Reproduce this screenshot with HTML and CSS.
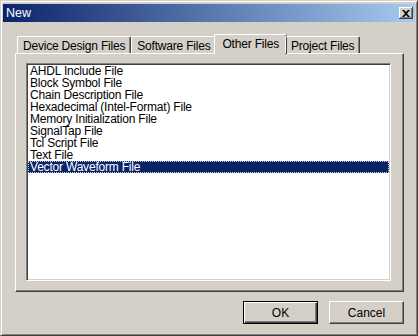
FILE: index.html
```html
<!DOCTYPE html>
<html lang="en">
<head>
    <meta charset="UTF-8">
    <meta name="viewport" content="width=device-width, initial-scale=1.0">
    <title>New</title>
    <link rel="stylesheet" href="styles.css">
</head>
<body>
    <div class="window">
        <div class="titlebar">
            <span class="title">New</span>
            <button class="close" aria-label="Close">
                <svg width="8" height="7" viewBox="0 0 8 7">
                    <path d="M0 0h2l2 2 2-2h2L5 3.5 8 7H6L4 5 2 7H0l3-3.5z" fill="#000"/>
                </svg>
            </button>
        </div>

        <div class="tabs">
            <div class="tab">Device Design Files</div>
            <div class="tab">Software Files</div>
            <div class="tab selected">Other Files</div>
            <div class="tab">Project Files</div>
        </div>
        <div class="panel">
            <ul class="list">
                <li>AHDL Include File</li>
                <li>Block Symbol File</li>
                <li>Chain Description File</li>
                <li>Hexadecimal (Intel-Format) File</li>
                <li>Memory Initialization File</li>
                <li>SignalTap File</li>
                <li>Tcl Script File</li>
                <li>Text File</li>
                <li class="active">Vector Waveform File</li>
            </ul>
        </div>

        <div class="buttons">
            <button class="btn default">OK</button>
            <button class="btn">Cancel</button>
        </div>
    </div>
</body>
</html>
```

FILE: styles.css
```css
* {
    box-sizing: border-box;
}
body {
    margin: 0;
    background-color: #d4d0c8;
    font-family: "Liberation Sans", Arial, sans-serif;
    font-size: 12px;
    color: #000;
}
.window {
    width: 418px;
    height: 336px;
    padding: 2px;
    border: 1px solid;
    border-color: #d4d0c8 #404040 #404040 #d4d0c8;
    box-shadow: inset 1px 1px #fff, inset -1px -1px #808080;
    background-color: #d4d0c8;
}
.titlebar {
    height: 18px;
    margin-top: 1px;
    display: flex;
    align-items: center;
    justify-content: space-between;
    padding: 0 2px 0 3px;
    background: linear-gradient(to right, #0a246a, #a6caf0);
}
.title {
    color: #fff;
    font-size: 12.5px;
}
.close {
    width: 14px;
    height: 12px;
    padding: 0;
    display: flex;
    align-items: center;
    justify-content: center;
    background-color: #d4d0c8;
    border: none;
    box-shadow: inset -1px -1px #404040, inset 1px 1px #fff, inset -2px -2px #808080;
}
.tabs {
    display: flex;
    align-items: flex-end;
    height: 20px;
    margin: 11px 0 0 14px;
    position: relative;
    z-index: 1;
}
.tab {
    height: 17px;
    padding: 2px 5px 0;
    border-top: 1px solid #fff;
    border-left: 1px solid #fff;
    border-right: 1px solid #404040;
    box-shadow: inset -1px 0 #808080;
    border-radius: 2px 2px 0 0;
    letter-spacing: -0.2px;
    white-space: nowrap;
}
.tab.selected {
    height: 20px;
    margin: 0 -2px -1px;
    padding: 2px 7px 0;
    background-color: #d4d0c8;
}
.panel {
    width: 389px;
    height: 239px;
    margin-left: 12px;
    padding: 9px 12px 10px 10px;
    border: 1px solid;
    border-color: #fff #404040 #404040 #fff;
    box-shadow: inset -1px -1px #808080;
}
.list {
    list-style: none;
    margin: 0;
    height: 100%;
    padding: 1px 0 0 1px;
    background-color: #fff;
    border: 1px solid;
    border-color: #808080 #fff #fff #808080;
    box-shadow: inset 1px 1px #404040, inset -1px -1px #d4d0c8;
}
.list li {
    height: 12px;
    line-height: 12px;
    padding-left: 2px;
    margin-right: 1px;
    letter-spacing: -0.2px;
    white-space: nowrap;
}
.list li.active {
    background-color: #0a246a;
    color: #fff;
    outline: 1px dotted #d4d0c8;
    outline-offset: -1px;
}
.buttons {
    display: flex;
    justify-content: flex-end;
    gap: 11px;
    margin-top: 9px;
    padding-right: 11px;
}
.btn {
    width: 75px;
    height: 23px;
    padding: 0;
    font-family: "Liberation Sans", Arial, sans-serif;
    font-size: 12px;
    color: #000;
    background-color: #d4d0c8;
    border: 1px solid;
    border-color: #fff #404040 #404040 #fff;
    box-shadow: inset -1px -1px #808080;
}
.btn.default {
    border: 1px solid #000;
    box-shadow: inset 1px 1px #fff, inset -1px -1px #404040, inset -2px -2px #808080;
}
```
